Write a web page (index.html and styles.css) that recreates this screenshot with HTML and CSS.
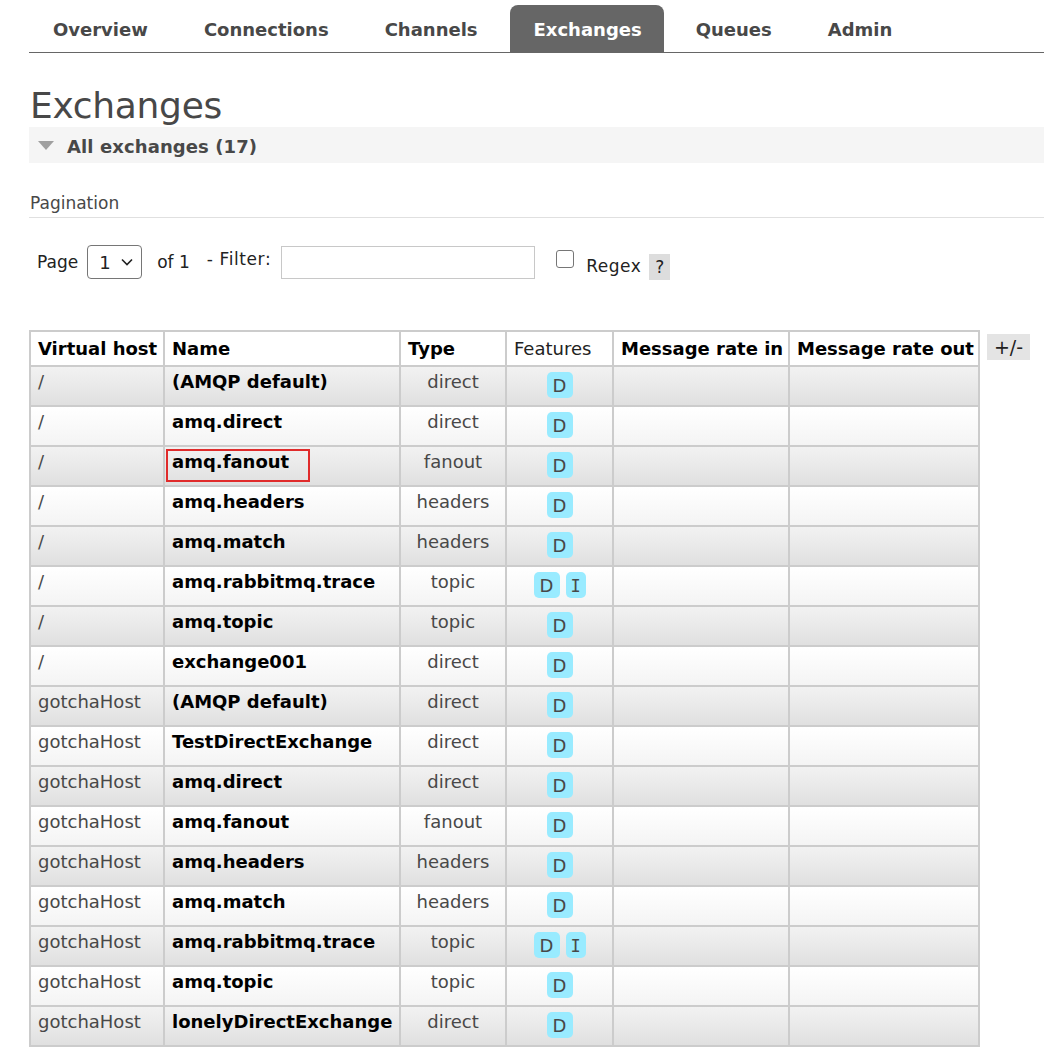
FILE: index.html
```html
<!DOCTYPE html>
<html>
<head>
<meta charset="utf-8">
<link rel="stylesheet" href="styles.css">
</head>
<body>
<div class="page">
  <nav class="tabs">
    <a class="tab">Overview</a>
    <a class="tab">Connections</a>
    <a class="tab">Channels</a>
    <a class="tab active">Exchanges</a>
    <a class="tab">Queues</a>
    <a class="tab">Admin</a>
  </nav>

  <h1 class="title">Exchanges</h1>

  <div class="section-head">
    <span class="tri"></span>
    <span class="section-title">All exchanges (17)</span>
  </div>

  <div class="pag-label">Pagination</div>

  <div class="pag-row">
    <span class="lbl page-lbl">Page</span>
    <span class="select"><span class="sel-val">1</span><svg class="chev" width="12" height="8" viewBox="0 0 12 8"><path d="M1 1.5 L6 6.5 L11 1.5" fill="none" stroke="#222" stroke-width="1.6"/></svg></span>
    <span class="lbl of">of 1</span>
    <span class="lbl filter">- Filter:</span>
    <span class="input"></span>
    <span class="checkbox"></span>
    <span class="lbl regex">Regex</span>
    <span class="help">?</span>
  </div>

  <div class="table-wrap">
    <table class="list">
      <colgroup>
        <col class="c1"><col class="c2"><col class="c3"><col class="c4"><col class="c5"><col class="c6">
      </colgroup>
      <thead>
        <tr>
          <th>Virtual host</th>
          <th>Name</th>
          <th>Type</th>
          <th class="plain">Features</th>
          <th>Message rate in</th>
          <th>Message rate out</th>
        </tr>
      </thead>
      <tbody>
        <tr class="odd"><td>/</td><td class="name">(AMQP default)</td><td class="center">direct</td><td class="feat"><span class="badge">D</span></td><td></td><td></td></tr>
        <tr class="even"><td>/</td><td class="name">amq.direct</td><td class="center">direct</td><td class="feat"><span class="badge">D</span></td><td></td><td></td></tr>
        <tr class="odd"><td>/</td><td class="name marked">amq.fanout<span class="redbox"></span></td><td class="center">fanout</td><td class="feat"><span class="badge">D</span></td><td></td><td></td></tr>
        <tr class="even"><td>/</td><td class="name">amq.headers</td><td class="center">headers</td><td class="feat"><span class="badge">D</span></td><td></td><td></td></tr>
        <tr class="odd"><td>/</td><td class="name">amq.match</td><td class="center">headers</td><td class="feat"><span class="badge">D</span></td><td></td><td></td></tr>
        <tr class="even"><td>/</td><td class="name">amq.rabbitmq.trace</td><td class="center">topic</td><td class="feat"><span class="badge">D</span><span class="badge narrow">I</span></td><td></td><td></td></tr>
        <tr class="odd"><td>/</td><td class="name">amq.topic</td><td class="center">topic</td><td class="feat"><span class="badge">D</span></td><td></td><td></td></tr>
        <tr class="even"><td>/</td><td class="name">exchange001</td><td class="center">direct</td><td class="feat"><span class="badge">D</span></td><td></td><td></td></tr>
        <tr class="odd"><td>gotchaHost</td><td class="name">(AMQP default)</td><td class="center">direct</td><td class="feat"><span class="badge">D</span></td><td></td><td></td></tr>
        <tr class="even"><td>gotchaHost</td><td class="name">TestDirectExchange</td><td class="center">direct</td><td class="feat"><span class="badge">D</span></td><td></td><td></td></tr>
        <tr class="odd"><td>gotchaHost</td><td class="name">amq.direct</td><td class="center">direct</td><td class="feat"><span class="badge">D</span></td><td></td><td></td></tr>
        <tr class="even"><td>gotchaHost</td><td class="name">amq.fanout</td><td class="center">fanout</td><td class="feat"><span class="badge">D</span></td><td></td><td></td></tr>
        <tr class="odd"><td>gotchaHost</td><td class="name">amq.headers</td><td class="center">headers</td><td class="feat"><span class="badge">D</span></td><td></td><td></td></tr>
        <tr class="even"><td>gotchaHost</td><td class="name">amq.match</td><td class="center">headers</td><td class="feat"><span class="badge">D</span></td><td></td><td></td></tr>
        <tr class="odd"><td>gotchaHost</td><td class="name">amq.rabbitmq.trace</td><td class="center">topic</td><td class="feat"><span class="badge">D</span><span class="badge narrow">I</span></td><td></td><td></td></tr>
        <tr class="even"><td>gotchaHost</td><td class="name">amq.topic</td><td class="center">topic</td><td class="feat"><span class="badge">D</span></td><td></td><td></td></tr>
        <tr class="odd"><td>gotchaHost</td><td class="name">lonelyDirectExchange</td><td class="center">direct</td><td class="feat"><span class="badge">D</span></td><td></td><td></td></tr>
      </tbody>
    </table>
    <span class="toggle">+/-</span>
  </div>
</div>
</body>
</html>
```

FILE: styles.css
```css
html, body {
  margin: 0;
  padding: 0;
  background: #fff;
}

body {
  font-family: "DejaVu Sans", Verdana, sans-serif;
  color: #484848;
  overflow: hidden;
}

.page {
  margin-left: 29px;
  padding-top: 5px;
}

.tabs {
  display: flex;
  border-bottom: 1px solid #666;
  height: 48px;
  box-sizing: border-box;
}

.tab {
  display: block;
  padding: 0 24px;
  margin-right: 8px;
  height: 47px;
  line-height: 49px;
  font-size: 18px;
  font-weight: bold;
  color: #484848;
}

.tab.active {
  background: #666;
  color: #fff;
  border-radius: 8px 8px 0 0;
  padding-right: 22px;
}

.title {
  margin: 32px 0 0 1px;
  font-size: 36px;
  font-weight: normal;
  line-height: 42px;
  color: #484848;
  letter-spacing: -0.3px;
}

.section-head {
  margin-top: 0;
  height: 36px;
  background: #f5f5f5;
  display: flex;
  align-items: center;
}

.tri {
  width: 0;
  height: 0;
  border-left: 8px solid transparent;
  border-right: 8px solid transparent;
  border-top: 9px solid #a0a0a0;
  margin-left: 9px;
  margin-right: 13px;
}

.section-title {
  font-size: 18px;
  font-weight: bold;
  color: #484848;
  padding-top: 3px;
  letter-spacing: 0.1px;
}

.pag-label {
  margin-top: 30px;
  padding-left: 1px;
  font-size: 17px;
  line-height: 20px;
  padding-bottom: 4px;
  border-bottom: 1px solid #e0e0e0;
  color: #484848;
}

.pag-row {
  display: flex;
  align-items: center;
  margin-top: 27px;
  height: 34px;
  color: #222;
}

.lbl {
  font-size: 17px;
  white-space: nowrap;
}

.page-lbl {
  margin-left: 8px;
  margin-right: 9px;
}

.select {
  display: flex;
  align-items: center;
  box-sizing: border-box;
  width: 55px;
  height: 34px;
  border: 1px solid #767676;
  border-radius: 4px;
  padding-left: 11px;
  font-size: 18px;
  color: #222;
}

.sel-val {
  margin-right: 10px;
}

.of {
  margin-left: 15px;
}

.filter {
  margin-left: 17px;
  margin-top: -6px;
  letter-spacing: 0.6px;
}

.input {
  display: block;
  box-sizing: border-box;
  width: 254px;
  height: 33px;
  margin-left: 10px;
  border: 1px solid #c8c8c8;
}

.checkbox {
  display: block;
  box-sizing: border-box;
  width: 18px;
  height: 18px;
  margin-left: 21px;
  margin-top: -6px;
  border: 1px solid #767676;
  border-radius: 3px;
}

.regex {
  margin-left: 12px;
  margin-top: 8px;
  font-size: 17px;
  letter-spacing: 0.5px;
}

.help {
  display: block;
  width: 21px;
  height: 26px;
  line-height: 26px;
  text-align: center;
  margin-left: 8px;
  margin-top: 10px;
  background: #dddddd;
  font-size: 17px;
}

.table-wrap {
  display: flex;
  align-items: flex-start;
  gap: 7px;
  margin-top: 51px;
}

.list {
  border-collapse: collapse;
  table-layout: fixed;
  width: 951px;
  border: 2px solid #ccc;
}

.list col.c1 { width: 134px; }
.list col.c2 { width: 236px; }
.list col.c3 { width: 106px; }
.list col.c4 { width: 107px; }
.list col.c5 { width: 176px; }
.list col.c6 { width: 190px; }

.list th, .list td {
  border: 2px solid #ccc;
  text-align: left;
  white-space: nowrap;
  overflow: hidden;
}

.list th {
  height: 33px;
  padding: 0 7px;
  font-size: 18px;
  font-weight: bold;
  color: #000;
  background: #fff;
}

.list th.plain {
  font-weight: normal;
  color: #222;
}

.list td {
  height: 38px;
  box-sizing: border-box;
  padding: 2px 7px 10px;
  line-height: 26px;
  vertical-align: top;
  font-size: 18px;
  color: #484848;
}

.list td.name {
  font-weight: bold;
  color: #000;
}

.list td.center {
  text-align: center;
}

.list td.feat {
  text-align: center;
  padding: 5px 4px 7px;
}

.list tr.odd td {
  background: linear-gradient(to bottom, #f2f2f2, #e0e0e0);
}

.list tr.even td {
  background: linear-gradient(to bottom, #ffffff, #f4f4f4);
}

.badge {
  display: inline-block;
  width: 26px;
  height: 26px;
  line-height: 28px;
  margin: 0 3px;
  border-radius: 5px;
  background: #99ebff;
  color: #484848;
  font-size: 18px;
  font-weight: normal;
  text-align: center;
  vertical-align: top;
}

.badge.narrow {
  width: 20px;
  font-family: "DejaVu Sans Mono", monospace;
  font-size: 17px;
}

.marked {
  position: relative;
}

.redbox {
  position: absolute;
  left: 1px;
  top: 2px;
  width: 144px;
  height: 33px;
  box-sizing: border-box;
  border: 2px solid #e02b2b;
}

.toggle {
  display: block;
  width: 43px;
  height: 26px;
  line-height: 26px;
  margin-top: 4px;
  text-align: center;
  background: #e4e4e4;
  font-size: 19px;
  color: #222;
}
```
